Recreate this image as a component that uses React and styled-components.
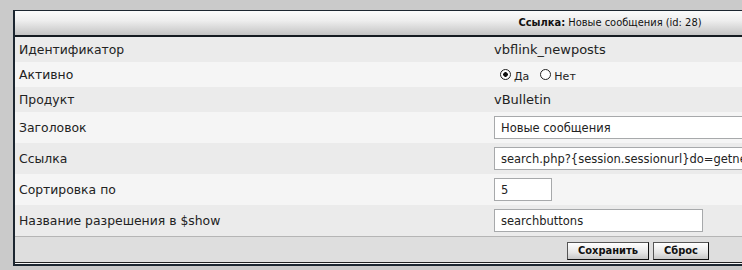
import React from 'react'
import styled, { createGlobalStyle } from 'styled-components'

const Global = createGlobalStyle`
  html, body {
    margin: 0;
    padding: 0;
    background: #cacaca;
    overflow: hidden;
  }
  body {
    font-family: "DejaVu Sans", Verdana, sans-serif;
    color: #222;
  }
`

const Page = styled.div`
  padding: 10px 0 0 13px;
`

const Panel = styled.div`
  width: 1190px;
  border: 1px solid #1c2630;
  border-left-width: 2px;
  border-bottom: 2px solid #1c2630;
  background: #f5f5f5;
`

const Header = styled.div`
  height: 24px;
  line-height: 24px;
  text-align: center;
  font-family: "DejaVu Sans Condensed", "DejaVu Sans", sans-serif;
  font-size: 11px;
  color: #111;
  background: linear-gradient(#fbfbfb 0%, #eeeeee 40%, #c4c4c4 100%);
  border-bottom: 2px solid #141a20;
  b {
    font-weight: bold;
  }
`

const Row = styled.div`
  display: grid;
  grid-template-columns: 475px 1fr;
  align-items: center;
  min-height: ${(p) => (p.tall ? 31 : 25)}px;
  background: ${(p) => (p.alt ? '#f5f5f5' : '#ebebeb')};
  font-size: 13px;
`

const Label = styled.div`
  padding: 0 4px;
  line-height: 17px;
  font-size: 12.4px;
`

const Value = styled.div`
  padding: 0 4px;
  line-height: 17px;
  display: flex;
  align-items: center;
`

const Field = styled.input`
  box-sizing: border-box;
  width: ${(p) => p.w}px;
  height: 23px;
  padding: 0 6px;
  border: 1px solid #a7a9ab;
  background: #fff;
  font-family: "DejaVu Sans", Verdana, sans-serif;
  font-size: 11.5px;
  color: #222;
  outline: none;
`

const Radio = styled.span`
  display: inline-block;
  box-sizing: border-box;
  width: 11px;
  height: 11px;
  border-radius: 50%;
  border: 1px solid #222;
  background: ${(p) => (p.on ? 'radial-gradient(circle, #111 0 2px, #fff 2.6px)' : '#fff')};
  margin: 0 3px 0 6px;
`

const RadioText = styled.span`
  font-size: 11px;
  margin-top: 4px;
  margin-right: 5px;
`

const Footer = styled.div`
  display: flex;
  justify-content: flex-start;
  gap: 4px;
  padding: 5px 0 0 552px;
  height: 20px;
  background: #dedede;
  border-top: 1px solid #b5b5b5;
  border-bottom: 1px solid #222;
  margin-bottom: 1px;
`

const Button = styled.button`
  height: 18px;
  padding: 0 10px;
  font-family: "DejaVu Sans Condensed", "DejaVu Sans", sans-serif;
  font-size: 11px;
  font-weight: bold;
  color: #111;
  background: linear-gradient(#ffffff, #e6e6e6 60%, #c8c8c8);
  border: 1px solid #555;
  border-right-color: #111;
  border-bottom-color: #111;
  border-radius: 0;
  line-height: 14px;
`

export default function App() {
  return (
    <Page>
      <Global />
      <Panel>
        <Header>
          <b>Ссылка:</b> Новые сообщения (id: 28)
        </Header>
        <Row>
          <Label>Идентификатор</Label>
          <Value>vbflink_newposts</Value>
        </Row>
        <Row alt>
          <Label>Активно</Label>
          <Value>
            <Radio on />
            <RadioText>Да</RadioText>
            <Radio />
            <RadioText>Нет</RadioText>
          </Value>
        </Row>
        <Row>
          <Label>Продукт</Label>
          <Value>vBulletin</Value>
        </Row>
        <Row alt tall>
          <Label>Заголовок</Label>
          <Value>
            <Field w={400} defaultValue="Новые сообщения" />
          </Value>
        </Row>
        <Row tall>
          <Label>Ссылка</Label>
          <Value>
            <Field w={400} defaultValue="search.php?{session.sessionurl}do=getnew" />
          </Value>
        </Row>
        <Row alt tall>
          <Label>Сортировка по</Label>
          <Value>
            <Field w={58} defaultValue="5" />
          </Value>
        </Row>
        <Row tall>
          <Label>Название разрешения в $show</Label>
          <Value>
            <Field w={209} defaultValue="searchbuttons" />
          </Value>
        </Row>
        <Footer>
          <Button>Сохранить</Button>
          <Button>Сброс</Button>
        </Footer>
      </Panel>
    </Page>
  )
}
